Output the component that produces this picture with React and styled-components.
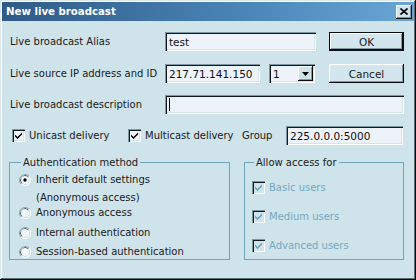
import React from "react";
import styled, { createGlobalStyle } from "styled-components";

const Global = createGlobalStyle`
  html, body {
    margin: 0;
    padding: 0;
    background: #cfe3eb;
  }
  * {
    box-sizing: border-box;
  }
`;

const Window = styled.div`
  width: 416px;
  height: 280px;
  padding: 2px;
  background: #cfe3eb;
  font-family: "DejaVu Sans", "Liberation Sans", sans-serif;
  font-size: 10px;
  color: #1a1a1a;
  display: flex;
  flex-direction: column;
  box-shadow: inset -1px -1px #0c0c0c, inset 1px 1px #dbe8ee,
    inset -2px -2px #5d6c73, inset 2px 2px #ffffff;
`;

const TitleBar = styled.div`
  height: 19px;
  display: flex;
  align-items: center;
  justify-content: space-between;
  padding: 0 2px 0 4px;
  background: linear-gradient(90deg, #2f5a87 0%, #4a86b8 60%, #6aa6d4 100%);
`;

const Title = styled.div`
  color: #ffffff;
  font-weight: bold;
  font-size: 10.2px;
`;

const CloseButton = styled.div`
  width: 16px;
  height: 14px;
  display: flex;
  align-items: center;
  justify-content: center;
  background: #cfe3eb;
  box-shadow: inset -1px -1px #0c0c0c, inset 1px 1px #ffffff,
    inset -2px -2px #7d9aa6;
`;

const Body = styled.div`
  flex: 1;
  padding: 11px 10px 0 8px;
  display: flex;
  flex-direction: column;
`;

const Row = styled.div`
  display: flex;
  align-items: center;
  height: 19px;
  margin-bottom: ${(p) => p.$gap || 0}px;
`;

const Label = styled.div`
  width: 155px;
  flex: none;
`;

const Field = styled.div`
  width: ${(p) => p.$w}px;
  height: 19px;
  flex: none;
  display: flex;
  align-items: center;
  padding: 0 4px;
  background: #eef3fa;
  font-size: 10.5px;
  color: #101010;
  margin-right: ${(p) => p.$mr || 0}px;
  box-shadow: inset 1px 1px #7b97a3, inset 2px 2px #0e1a20,
    inset -1px -1px #ffffff, inset -2px -2px #d6e4ea;
`;

const Caret = styled.span`
  display: inline-block;
  width: 1px;
  height: 13px;
  background: #000;
`;

const Select = styled(Field)`
  padding: 0 2px 0 4px;
  justify-content: space-between;
`;

const DropButton = styled.div`
  width: 15px;
  height: 15px;
  display: flex;
  align-items: center;
  justify-content: center;
  background: #cfe3eb;
  box-shadow: inset -1px -1px #0c0c0c, inset 1px 1px #ffffff,
    inset -2px -2px #7d9aa6;
`;

const Button = styled.div`
  width: 75px;
  height: 19px;
  flex: none;
  display: flex;
  align-items: center;
  justify-content: center;
  background: #d3e6ee;
  font-size: 10.5px;
  color: #1a1a1a;
  box-shadow: ${(p) =>
    p.$default
      ? "inset 0 0 0 1px #0c0c0c, inset -2px -2px #0c0c0c, inset 2px 2px #ffffff, inset -3px -3px #7d9aa6"
      : "inset -1px -1px #0c0c0c, inset 1px 1px #ffffff, inset -2px -2px #7d9aa6"};
`;

const Check = styled.div`
  display: flex;
  align-items: center;
  gap: 4px;
  color: ${(p) => (p.$disabled ? "#74a8c0" : "#1a1a1a")};
  margin-left: ${(p) => p.$ml || 0}px;
  width: ${(p) => (p.$w ? `${p.$w}px` : "auto")};
  flex: none;
`;

const Box = styled.div`
  width: 13px;
  height: 13px;
  flex: none;
  display: flex;
  align-items: center;
  justify-content: center;
  background: ${(p) => (p.$disabled ? "#cfe3eb" : "#f2f6fb")};
  box-shadow: inset 1px 1px #7b97a3, inset 2px 2px #0e1a20,
    inset -1px -1px #ffffff, inset -2px -2px #d6e4ea;
`;

const Groups = styled.div`
  display: flex;
  margin-top: 12px;
  margin-left: -1px;
`;

const GroupBox = styled.fieldset`
  margin: 0;
  width: ${(p) => p.$w}px;
  height: 103px;
  margin-right: ${(p) => p.$mr || 0}px;
  border: 1px solid #6ea6bd;
  padding: 0 0 0 ${(p) => p.$pl}px;
  display: flex;
  flex-direction: column;
  min-width: 0;
`;

const Legend = styled.legend`
  padding: 0 2px;
  margin-left: 2px;
  font-size: 10px;
  color: #1a1a1a;
`;

const RadioItem = styled.div`
  display: flex;
  align-items: ${(p) => (p.$top ? "flex-start" : "center")};
  gap: 5px;
  margin-top: ${(p) => p.$mt}px;
  line-height: 18px;
`;

const RadioDot = styled.div`
  padding-top: 3px;
  flex: none;
`;

const RadioLabel = styled.div`
  display: flex;
  flex-direction: column;
`;

const CheckList = styled.div`
  display: flex;
  flex-direction: column;
  gap: 16px;
  margin-top: 13px;
`;

const Radio = ({ on }) => (
  <svg width="12" height="12" viewBox="0 0 12 12" style={{ flex: "none" }}>
    <path d="M10 2.2 A5.5 5.5 0 0 0 2.2 10" stroke="#7b97a3" strokeWidth="1" fill="none" />
    <path d="M9.2 3 A4.4 4.4 0 0 0 3 9.2" stroke="#0e1a20" strokeWidth="1" fill="none" />
    <path d="M10 2.2 A5.5 5.5 0 0 1 2.2 10" stroke="#ffffff" strokeWidth="1" fill="none" />
    <circle cx="6" cy="6" r="4" fill="#f2f6fb" />
    {on && <circle cx="6" cy="6" r="1.7" fill="#000" />}
  </svg>
);

const Tick = ({ color }) => (
  <svg width="9" height="9" viewBox="0 0 9 9">
    <path d="M1 3.5 L3.5 6 L8 1.5 L8 3.5 L3.5 8 L1 5.5 Z" fill={color} />
  </svg>
);

const CheckBox = ({ label, disabled, ml, w }) => (
  <Check $disabled={disabled} $ml={ml} $w={w}>
    <Box $disabled={disabled}>
      <Tick color={disabled ? "#6c9fb6" : "#000"} />
    </Box>
    {label}
  </Check>
);

export default function App() {
  return (
    <>
      <Global />
      <Window>
        <TitleBar>
          <Title>New live broadcast</Title>
          <CloseButton>
            <svg width="8" height="7" viewBox="0 0 8 7">
              <path d="M0.5 0.5 L7.5 6.5 M7.5 0.5 L0.5 6.5" stroke="#000" strokeWidth="1.6" />
            </svg>
          </CloseButton>
        </TitleBar>
        <Body>
          <Row $gap={13}>
            <Label>Live broadcast Alias</Label>
            <Field $w={151} $mr={13}>test</Field>
            <Button $default>OK</Button>
          </Row>
          <Row $gap={12}>
            <Label>Live source IP address and ID</Label>
            <Field $w={95} $mr={9}>217.71.141.150</Field>
            <Select $w={46} $mr={14}>
              1
              <DropButton>
                <svg width="7" height="4" viewBox="0 0 7 4">
                  <path d="M0 0 H7 L3.5 4 Z" fill="#000" />
                </svg>
              </DropButton>
            </Select>
            <Button>Cancel</Button>
          </Row>
          <Row $gap={12}>
            <Label>Live broadcast description</Label>
            <Field $w={239}>
              <Caret />
            </Field>
          </Row>
          <Row>
            <CheckBox label="Unicast delivery" ml={2} w={116} />
            <CheckBox label="Multicast delivery" w={114} />
            <Check $w={44}>Group</Check>
            <Field $w={117}>225.0.0.0:5000</Field>
          </Row>
          <Groups>
            <GroupBox $w={221} $mr={14} $pl={9}>
              <Legend>Authentication method</Legend>
              <RadioItem $top $mt={3}>
                <RadioDot>
                  <Radio on />
                </RadioDot>
                <RadioLabel>
                  <span>Inherit default settings</span>
                  <span>(Anonymous access)</span>
                </RadioLabel>
              </RadioItem>
              <RadioItem $mt={-3}>
                <Radio />
                Anonymous access
              </RadioItem>
              <RadioItem $mt={2}>
                <Radio />
                Internal authentication
              </RadioItem>
              <RadioItem $mt={1}>
                <Radio />
                Session-based authentication
              </RadioItem>
            </GroupBox>
            <GroupBox $w={160} $pl={7}>
              <Legend>Allow access for</Legend>
              <CheckList>
                <CheckBox label="Basic users" disabled />
                <CheckBox label="Medium users" disabled />
                <CheckBox label="Advanced users" disabled />
              </CheckList>
            </GroupBox>
          </Groups>
        </Body>
      </Window>
    </>
  );
}
